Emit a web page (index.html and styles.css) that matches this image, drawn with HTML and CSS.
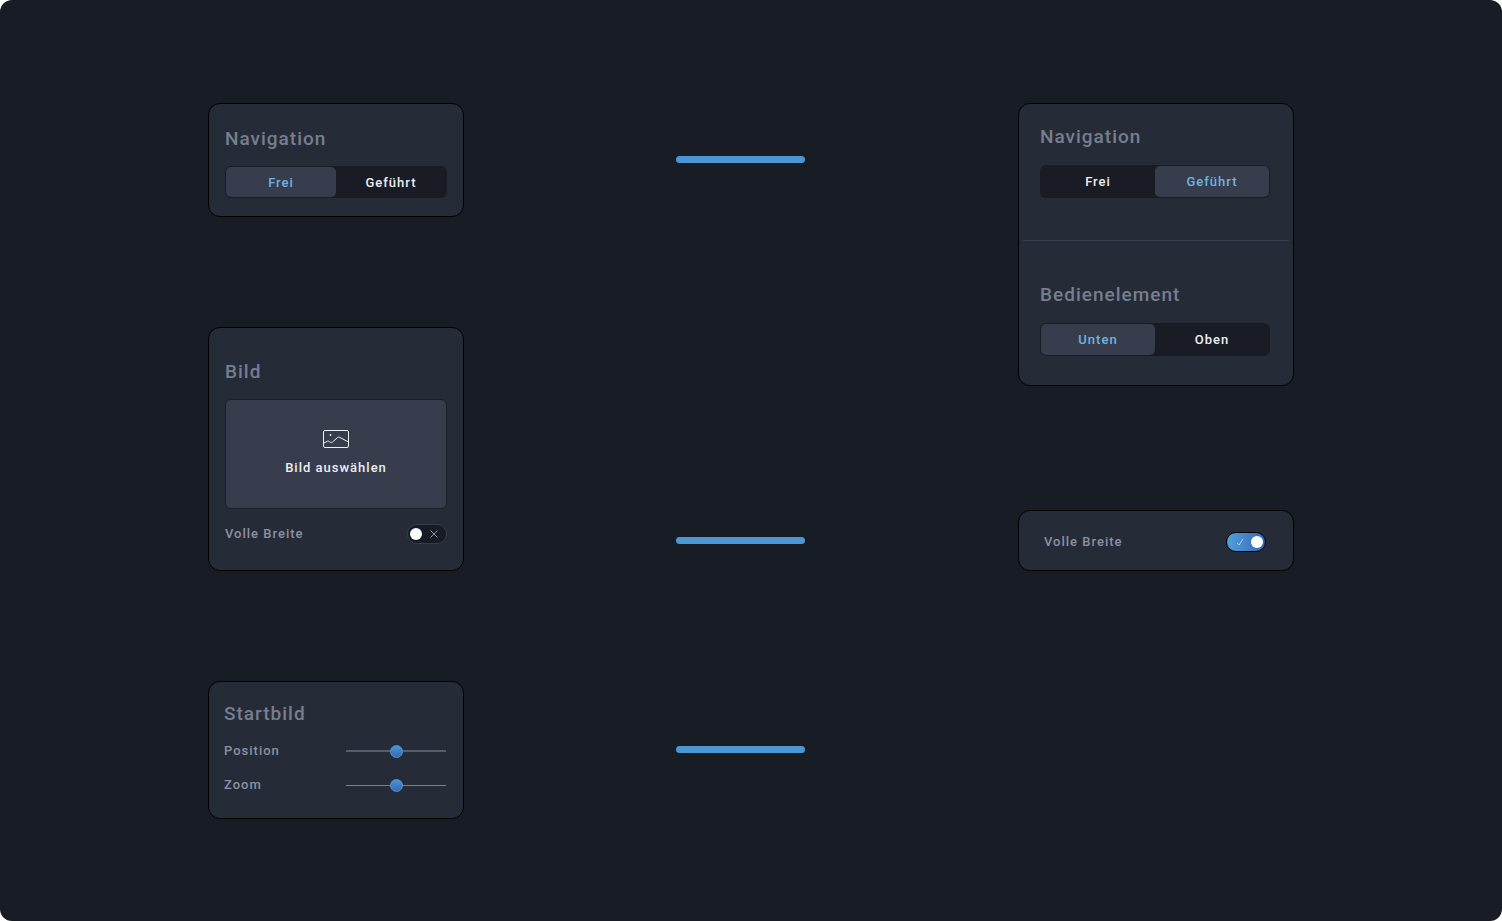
FILE: index.html
```html
<!DOCTYPE html>
<html lang="de">
<head>
  <meta charset="UTF-8" />
  <meta name="viewport" content="width=device-width, initial-scale=1.0" />
  <title>Navigation</title>
  <link rel="stylesheet" href="styles.css">
</head>
<body>
  <main class="board">
    <section class="card card-nav">
      <h2>Navigation</h2>
      <div class="segment">
        <button type="button" class="active" aria-pressed="true">Frei</button>
        <button type="button" aria-pressed="false">Geführt</button>
      </div>
    </section>

    <div class="bar bar-nav"></div>

    <div class="side">
      <section class="card card-guided">
        <div class="group">
          <h2>Navigation</h2>
          <div class="segment">
            <button type="button" aria-pressed="false">Frei</button>
            <button type="button" class="active" aria-pressed="true">Geführt</button>
          </div>
        </div>
        <hr>
        <div class="group">
          <h2>Bedienelement</h2>
          <div class="segment">
            <button type="button" class="active" aria-pressed="true">Unten</button>
            <button type="button" aria-pressed="false">Oben</button>
          </div>
        </div>
      </section>

      <section class="card card-width">
        <div class="row">
          <label for="width-on">Volle Breite</label>
          <span class="toggle">
            <input type="checkbox" id="width-on" checked>
            <svg class="mark-on" width="8" height="8" viewBox="0 0 8 8"><path d="M1 5 L3 7 L7 1" /></svg>
          </span>
        </div>
      </section>
    </div>

    <section class="card card-image">
      <h2>Bild</h2>
      <button type="button" class="picker">
        <svg width="26" height="18" viewBox="0 0 26 18">
          <rect x="0.5" y="0.5" width="25" height="17" rx="1.5" />
          <path d="M0.5 13.2 L4.5 11.2 Q5.5 10.8 6.3 11.6 L7.3 12.3 Q8.4 13 9.4 12.1 L14.6 7.5 Q15.6 6.7 16.8 7.4 L25.5 12" />
          <circle cx="7.5" cy="5" r="0.9" />
        </svg>
        Bild auswählen
      </button>
      <div class="row">
        <label for="width-off">Volle Breite</label>
        <span class="toggle">
          <input type="checkbox" id="width-off">
          <svg class="mark-off" width="8" height="8" viewBox="0 0 8 8"><path d="M0.5 0.5 L7.5 7.5 M7.5 0.5 L0.5 7.5" /></svg>
        </span>
      </div>
    </section>

    <div class="bar bar-image"></div>

    <section class="card card-start">
      <h2>Startbild</h2>
      <div class="row">
        <label for="position">Position</label>
        <input type="range" id="position" class="soft" min="0" max="100" value="50">
      </div>
      <div class="row">
        <label for="zoom">Zoom</label>
        <input type="range" id="zoom" min="0" max="100" value="50">
      </div>
    </section>

    <div class="bar bar-start"></div>
  </main>
</body>
</html>
```

FILE: styles.css
```css
* {
  box-sizing: border-box;
}
html {
  background: white;
}
body {
  margin: 0;
  font-family: Roboto, 'Liberation Sans', sans-serif;
  font-size: 13px;
  font-weight: 500;
  letter-spacing: 1px;
  color: #8b91a1;
}
.board {
  display: grid;
  grid-template-columns: 256fr 554fr 276fr;
  grid-template-rows: auto auto auto;
  row-gap: 110px;
  align-content: start;
  min-height: 100vh;
  padding: 103px 208px 102px;
  background: #181c24;
  border-radius: 12px;
}
.card {
  background: #262c37;
  border: 1px solid black;
  border-radius: 12px;
}
h2 {
  margin: 0 0 15px;
  font-size: 19px;
  font-weight: 500;
  line-height: 24px;
  color: #777e8f;
}
.card-nav {
  padding: 23px 16px 18px;
}
.card-image {
  grid-column: 1;
  grid-row: 2;
  padding: 32px 16px 26px;
}
.card-start {
  grid-column: 1;
  grid-row: 3;
  padding: 20px 17px 23px 15px;
}
.card-start .row + .row {
  margin-top: 14px;
}

/* right column */
.side {
  grid-column: 3;
  grid-row: 1 / 3;
  display: flex;
  flex-direction: column;
  justify-content: space-between;
}
.card-guided {
  padding: 21px 0 29px;
}
.card-guided h2 {
  margin-bottom: 16px;
}
.card-guided .segment {
  height: 33px;
}
.group {
  padding: 0 23px 0 21px;
}
hr {
  height: 1px;
  margin: 42px 4px;
  border: none;
  background: #393f4d;
}
.card-width {
  padding: 21px 27px 18px 25px;
}

/* connecting bars */
.bar {
  grid-column: 2;
  align-self: center;
  justify-self: center;
  width: 129px;
  height: 7px;
  margin: 0 1px 1px 0;
  border-radius: 4px;
  background: #4b97d2;
}
.bar-nav {
  grid-row: 1;
}
.bar-image {
  grid-row: 2;
  align-self: end;
  margin-bottom: 27px;
}
.bar-start {
  grid-row: 3;
}

button {
  padding: 0;
  border: none;
  font: inherit;
  letter-spacing: inherit;
  color: #eceef2;
  cursor: pointer;
}
.segment {
  display: flex;
  height: 32px;
  padding: 1px;
  border-radius: 6px;
  background: #191c24;
}
.segment button {
  flex: 1;
  border-radius: 5px;
  background: transparent;
}
.segment .active {
  background: #373d4c;
  color: #6fb4e0;
}
.picker {
  display: flex;
  flex-direction: column;
  align-items: center;
  justify-content: center;
  gap: 12px;
  width: 100%;
  height: 110px;
  margin-bottom: 15px;
  padding-bottom: 3px;
  border: 1px solid #1c1f27;
  border-radius: 6px;
  background: #373d4c;
}
.picker svg {
  fill: none;
  stroke: #eceef2;
  stroke-width: 1;
}
.picker circle {
  fill: #eceef2;
  stroke: none;
}

.row {
  display: flex;
  align-items: center;
  justify-content: space-between;
  height: 20px;
}
.row label {
  line-height: 20px;
}

.toggle {
  position: relative;
  display: flex;
}
.toggle input {
  appearance: none;
  display: flex;
  align-items: center;
  width: 40px;
  height: 20px;
  margin: 0;
  padding: 0 2px;
  border: 1px solid #363d4a;
  border-radius: 10px;
  background: #171b24;
}
.toggle input::before {
  content: "";
  width: 12px;
  height: 12px;
  border-radius: 50%;
  background: white;
}
.toggle input:checked {
  justify-content: flex-end;
  border-color: black;
  background: linear-gradient(90deg, #4fa0d8, #3767b8);
}
.toggle svg {
  position: absolute;
  top: 6px;
  fill: none;
  pointer-events: none;
}
.mark-off {
  right: 9px;
  stroke: #8b91a1;
}
.mark-on {
  left: 10px;
  stroke: #b5d8f2;
}

input[type="range"] {
  appearance: none;
  width: 100px;
  height: 13px;
  margin: 0;
  background: linear-gradient(#787f8e, #787f8e) center / 100% 1px no-repeat;
}
input[type="range"].soft {
  height: 14px;
  background: linear-gradient(#565d6b, #565d6b) center / 100% 2px no-repeat;
}
input[type="range"]::-webkit-slider-thumb {
  appearance: none;
  width: 13px;
  height: 13px;
  border: 1px solid #4b97d2;
  border-radius: 50%;
  background: linear-gradient(#4b97d2, #3767b8);
}
```
